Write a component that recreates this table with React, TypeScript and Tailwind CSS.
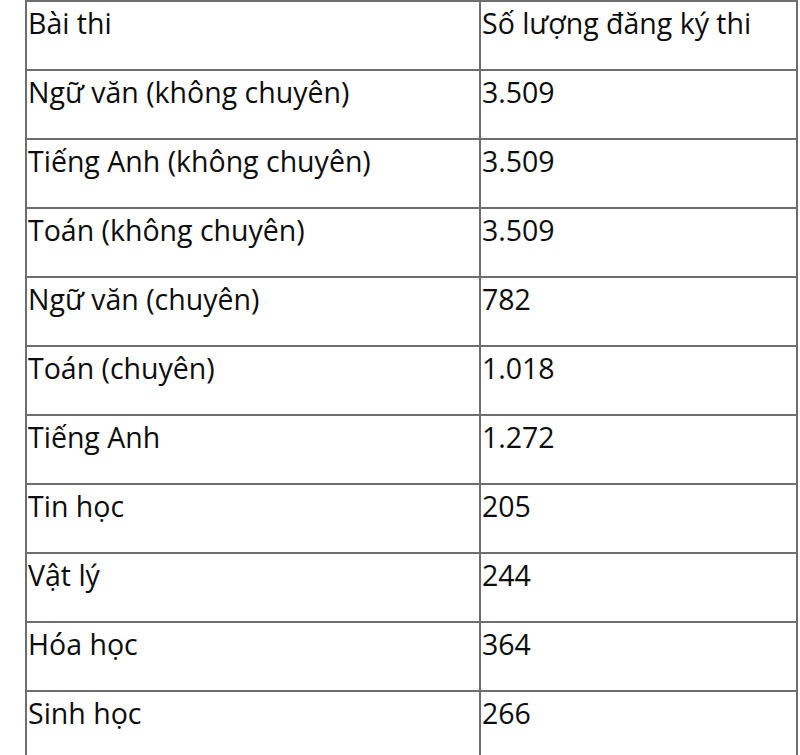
const rows: [string, string][] = [
  ["Bài thi", "Số lượng đăng ký thi"],
  ["Ngữ văn (không chuyên)", "3.509"],
  ["Tiếng Anh (không chuyên)", "3.509"],
  ["Toán (không chuyên)", "3.509"],
  ["Ngữ văn (chuyên)", "782"],
  ["Toán (chuyên)", "1.018"],
  ["Tiếng Anh", "1.272"],
  ["Tin học", "205"],
  ["Vật lý", "244"],
  ["Hóa học", "364"],
  ["Sinh học", "266"],
];

export default function App() {
  return (
    <div className="w-[800px] h-[755px] overflow-hidden bg-white pl-[25px] font-['Open_Sans',sans-serif] text-[#0d0d0d]">
      <table className="border-collapse w-[773px] table-fixed">
        <colgroup>
          <col className="w-[454px]" />
          <col />
        </colgroup>
        <tbody>
          {rows.map(([name, count]) => (
            <tr key={name} className="h-[69px]">
              <td className="border-2 border-[#6e6e6e] align-top pl-[1px] pt-[3px] text-[28.5px] leading-[36px]">{name}</td>
              <td className="border-2 border-[#6e6e6e] align-top pl-[1px] pt-[3px] text-[28.5px] leading-[36px]">{count}</td>
            </tr>
          ))}
        </tbody>
      </table>
    </div>
  );
}
